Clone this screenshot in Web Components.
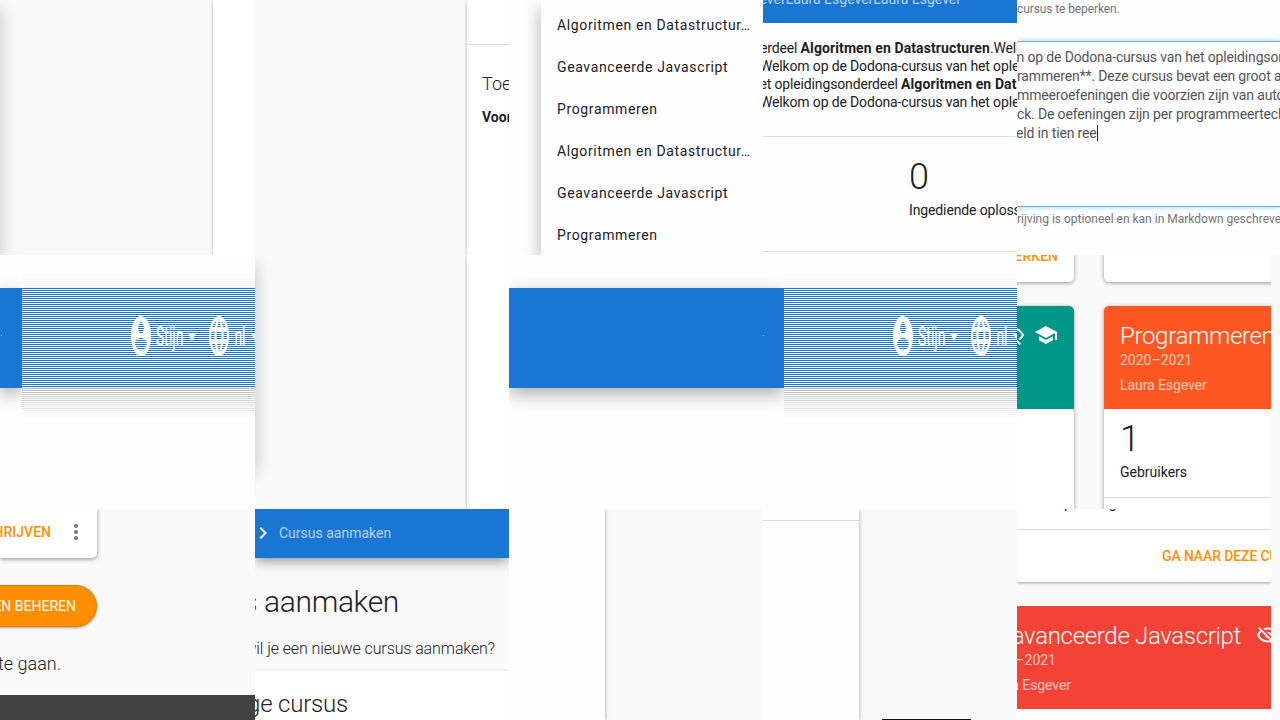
<!DOCTYPE html>
<html lang="nl">
<head>
<meta charset="utf-8">
<title>Dodona</title>
<style>
html,body{margin:0;padding:0;width:1280px;height:720px;overflow:hidden;background:#fefefe}
body{font-family:Roboto,"Liberation Sans",sans-serif;color:#212121}
</style>
</head>
<body>
<tile-mosaic></tile-mosaic>
<script>
const ICONS={
account:'M12 19.2c-2.5 0-4.71-1.28-6-3.2.03-2 4-3.1 6-3.1s5.97 1.1 6 3.1c-1.29 1.92-3.5 3.2-6 3.2M12 5a3 3 0 0 1 3 3 3 3 0 0 1-3 3 3 3 0 0 1-3-3 3 3 0 0 1 3-3m0-3A10 10 0 0 0 2 12a10 10 0 0 0 10 10 10 10 0 0 0 10-10c0-5.53-4.5-10-10-10z',
web:'M16.36,14C16.44,13.34 16.5,12.68 16.5,12C16.5,11.32 16.44,10.66 16.36,10H19.74C19.9,10.64 20,11.31 20,12C20,12.69 19.9,13.36 19.74,14M14.59,19.56C15.19,18.45 15.65,17.25 15.97,16H18.92C17.96,17.65 16.43,18.93 14.59,19.56M14.34,14H9.66C9.56,13.34 9.5,12.68 9.5,12C9.5,11.32 9.56,10.65 9.66,10H14.34C14.43,10.65 14.5,11.32 14.5,12C14.5,12.68 14.43,13.34 14.34,14M12,19.96C11.17,18.76 10.5,17.43 10.09,16H13.91C13.5,17.43 12.83,18.76 12,19.96M8,8H5.08C6.03,6.34 7.57,5.06 9.4,4.44C8.8,5.55 8.35,6.75 8,8M5.08,16H8C8.35,17.25 8.8,18.45 9.4,19.56C7.57,18.93 6.03,17.65 5.08,16M4.26,14C4.1,13.36 4,12.69 4,12C4,11.31 4.1,10.64 4.26,10H7.64C7.56,10.66 7.5,11.32 7.5,12C7.5,12.68 7.56,13.34 7.64,14M12,4.03C12.83,5.23 13.5,6.57 13.91,8H10.09C10.5,6.57 11.17,5.23 12,4.03M18.92,8H15.97C15.65,6.75 15.19,5.55 14.59,4.44C16.43,5.07 17.96,6.34 18.92,8M12,2C6.47,2 2,6.5 2,12A10,10 0 0,0 12,22A10,10 0 0,0 22,12A10,10 0 0,0 12,2Z',
eye:'M2,5.27L3.28,4L20,20.72L18.73,22L15.65,18.92C14.5,19.3 13.28,19.5 12,19.5C7,19.5 2.73,16.39 1,12C1.69,10.24 2.79,8.69 4.19,7.46L2,5.27M12,9A3,3 0 0,1 15,12C15,12.35 14.94,12.69 14.83,13L11,9.17C11.31,9.06 11.65,9 12,9M12,4.5C17,4.5 21.27,7.61 23,12C22.18,14.08 20.79,15.88 19,17.19L17.58,15.76C18.94,14.82 20.06,13.54 20.82,12C19.17,8.64 15.76,6.5 12,6.5C10.91,6.5 9.84,6.68 8.84,7L7.3,5.47C8.74,4.85 10.33,4.5 12,4.5M3.18,12C4.83,15.36 8.24,17.5 12,17.5C12.69,17.5 13.37,17.43 14,17.29L11.72,15C10.29,14.85 9.15,13.71 9,12.28L5.6,8.87C4.61,9.72 3.78,10.78 3.18,12Z',
school:'M12,3L1,9L12,15L21,10.09V17H23V9M5,13.18V17.18L12,21L19,17.18V13.18L12,17L5,13.18Z',
chevron:'M8.59,16.58L13.17,12L8.59,7.41L10,6L16,12L10,18L8.59,16.58Z',
dots:'M12,16A2,2 0 0,1 14,18A2,2 0 0,1 12,20A2,2 0 0,1 10,18A2,2 0 0,1 12,16M12,10A2,2 0 0,1 14,12A2,2 0 0,1 12,14A2,2 0 0,1 10,12A2,2 0 0,1 12,10M12,4A2,2 0 0,1 14,6A2,2 0 0,1 12,8A2,2 0 0,1 10,6A2,2 0 0,1 12,4Z'
};
function define(name,html,after){
  customElements.define(name,class extends HTMLElement{
    connectedCallback(){
      if(this.shadowRoot)return;
      const r=this.attachShadow({mode:'open'});
      r.innerHTML='<style>*{box-sizing:border-box}:host{display:block;box-sizing:border-box}</style>'+html;
      if(after)after(this,r);
    }
  });
}

define('ui-icon','<style>:host{width:24px;height:24px;flex:none}svg{display:block;width:100%;height:100%;fill:currentColor}</style><svg viewBox="0 0 24 24" preserveAspectRatio="none"><path/></svg>',
(h,r)=>r.querySelector('path').setAttribute('d',ICONS[h.getAttribute('name')]));

/* One line of text: size, weight and line height; "x" indents it, "end" aligns its right side. */
define('ui-text','<style>:host{white-space:pre;flex:none}:host([end]){display:flex;justify-content:flex-end}</style><span><slot></slot></span>',
(h,r)=>{
  const a=n=>h.getAttribute(n);
  h.style.fontSize=(a('size')||14)+'px';
  h.style.fontWeight=a('weight')||400;
  h.style.lineHeight=(a('h')||20)+'px';
  h.style.height=(a('h')||20)+'px';
  if(a('x'))h.style.marginLeft=a('x')+'px';
  if(a('end'))h.style.width=a('end')+'px';
  if(a('top'))h.style.marginTop=a('top')+'px';
  if(a('ls'))h.style.letterSpacing=a('ls')+'px';
});

define('tile-mosaic',`<style>
:host{display:grid;width:1280px;height:720px;grid-template-columns:255px 254px 254px 254px 254px 9px;grid-template-rows:255px 254px 211px}
:host>*{overflow:hidden;min-width:0}
.wide{grid-column:span 2}
.edge{background:#fafafa}
</style>
<page-gutter style="--card:42px;--sheet:255px"></page-gutter>
<access-tile></access-tile>
<menu-tile></menu-tile>
<intro-tile></intro-tile>
<form-tile class="wide"></form-tile>
<banner-tile style="--solid:22px;--dot:2px"></banner-tile>
<page-gutter style="--card:42px;--sheet:212px"></page-gutter>
<banner-tile class="wide" style="--solid:275px;--dot:255px"></banner-tile>
<course-tile></course-tile>
<div class="edge"></div>
<actions-tile></actions-tile>
<create-tile></create-tile>
<sheet-tile style="--sheet:96px"></sheet-tile>
<sheet-tile lined style="--sheet:96px"></sheet-tile>
<red-tile></red-tile>
<div class="edge"></div>`);

define('page-gutter',`<style>
:host{display:flex;justify-content:space-between;background:#fafafa;overflow:hidden}
.side{width:10px;margin-left:-10px;height:var(--sheet);box-shadow:0 8px 17px 0 rgba(0,0,0,.27)}
.card{width:var(--card);background:#fff;box-shadow:0 1px 3px rgba(0,0,0,.35)}
</style><div class="side"></div><div class="card"></div>`);

define('access-tile',`<style>
:host{display:flex;justify-content:flex-end;background:#fafafa}
.card{width:42px;background:#fff;box-shadow:0 1px 3px rgba(0,0,0,.35);overflow:visible}
.top{height:45px;border-bottom:1px solid #ddd}
.body{padding:27px 0 0 15px;overflow:hidden}
</style><div class="card"><div class="top"></div><div class="body">
<ui-text size="18" weight="300" h="24">Toegang</ui-text><ui-text weight="700" h="20" top="11">Voor wie</ui-text></div></div>`);

define('menu-tile',`<style>
:host{background:#fefefe;padding-left:32px}
.menu{height:255px;padding:4px 0 0 16px;background:#fefefe;box-shadow:0 8px 17px rgba(0,0,0,.3)}
</style><div class="menu"></div>`,(h,r)=>{
  const m=r.querySelector('.menu'),n=['Algoritmen en Datastructur…','Geavanceerde Javascript','Programmeren'];
  m.innerHTML=[...n,...n].map(t=>`<ui-text h="42" ls="0.63">${t}</ui-text>`).join('');
});

define('intro-tile',`<style>
:host{background:#fefefe}
.head{height:23px;background:#1976d2;color:rgba(255,255,255,.7);overflow:hidden}
.copy{height:114px;padding-top:16px;border-bottom:1px solid #ddd;letter-spacing:-.15px}
b{letter-spacing:.1px}
.stat{height:115px;padding:20px 0 0 146px;border-bottom:1px solid #ddd}
</style>
<div class="head"><ui-text end="198" top="-11">Laura EsgeverLaura EsgeverLaura Esgever</ui-text></div>
<div class="copy">
<ui-text h="18" x="-3">erdeel <b>Algoritmen en Datastructuren</b>.Welkom</ui-text>
<ui-text h="18" x="-3">Welkom op de Dodona-cursus van het opleidings</ui-text>
<ui-text h="18" x="-3.5">et opleidingsonderdeel <b>Algoritmen en Datastructuren</b></ui-text>
<ui-text h="18" x="-3">Welkom op de Dodona-cursus van het opleidings</ui-text>
</div>
<div class="stat"><ui-text size="36" weight="300" h="40">0</ui-text><ui-text top="3" ls="-0.12">Ingediende oplossingen</ui-text></div>`);

define('form-tile',`<style>
:host{background:#fefefe;color:#757575}
.hint{height:41px;overflow:hidden}
.area{height:166px;border:solid #66afe9;border-width:1px 0;box-shadow:0 0 6px rgba(33,150,243,.4);padding-top:6px;color:#555;letter-spacing:-.15px}
.caret{display:inline-block;width:1px;height:16px;background:#222;vertical-align:-3px}
</style>
<div class="hint"><ui-text size="12" h="17" top="-16">toegang tot de cursus</ui-text><ui-text size="12" h="17" ls="-0.1">cursus te beperken.</ui-text></div>
<div class="area">
<ui-text h="19" x="-5">m op de Dodona-cursus van het opleidingsonderdeel</ui-text>
<ui-text h="19">rammeren**. Deze cursus bevat een groot aantal</ui-text>
<ui-text h="19">mmeeroefeningen die voorzien zijn van automatische</ui-text>
<ui-text h="19">ck. De oefeningen zijn per programmeertechniek</ui-text>
<ui-text h="19" x="-1">eld in tien ree<i class="caret"></i></ui-text>
</div>
<ui-text size="12" h="18" top="3">rijving is optioneel en kan in Markdown geschreven</ui-text>`);

define('banner-tile',`<style>
:host{background:#fefefe;padding-top:33px}
.bar{display:flex;height:100px;color:#fff}
.solid{width:var(--solid);background:#1976d2;box-shadow:0 6px 17px rgba(0,0,0,.32);flex:none;padding-top:47px}
.solid i{display:block;width:1px;height:1px;margin-left:calc(var(--dot) - 1px);background:#9cc4ec}
.lines{position:relative;width:233px;flex:none;display:flex;align-items:center;padding-left:107px;background:repeating-linear-gradient(#1976d2 0 1px,#fff 1px 2px)}
.lines::after{content:"";position:absolute;left:0;right:0;top:100px;height:30px;background:linear-gradient(rgba(254,254,254,0),#fefefe),repeating-linear-gradient(#bbb 0 1px,#fefefe 1px 2px)}
.lines::before{content:"";position:absolute;left:0;right:0;top:-18px;height:18px;background:linear-gradient(#fefefe,rgba(254,254,254,.2)),repeating-linear-gradient(#fefefe 0 1px,#eee 1px 2px)}
ui-icon{height:48px;margin-top:-4px}
ui-text{transform:scaleY(2);position:relative;top:-2px;margin-left:3px}
.caret{border:solid transparent;border-width:8px 4px 0;border-top-color:#fff;margin:-3px 0 0 5px}
</style><div class="bar"><div class="solid"><i></i></div><div class="lines">
<ui-icon name="account"></ui-icon><ui-text>Stijn</ui-text><i class="caret"></i>
<ui-icon name="web" style="margin-left:11px"></ui-icon><ui-text>nl</ui-text><i class="caret"></i></div></div>`);

define('course-head',`<style>
:host{height:103px;color:rgba(255,255,255,.7);background:var(--tone);padding-top:14px;overflow:hidden}
.row{display:flex;align-items:center;height:30px;color:#fff}
</style><div class="row"><slot name="title"></slot></div><slot></slot>`);

define('course-tile',`<style>
:host{display:grid;grid-template-columns:57px 1fr;grid-template-rows:27px 1fr;gap:24px 30px;background:#fafafa}
.card{background:#fff;box-shadow:0 1px 4px rgba(0,0,0,.4);border-radius:5px;min-width:0}
.l{margin-left:-10px;padding-left:10px}.r{margin-right:-10px}
.up{margin-top:-10px;padding-top:10px;color:#ff8f00}
.down{border-radius:5px 5px 0 0;margin-bottom:-10px}
.l course-head{margin-left:-10px;padding-left:10px;border-radius:0 5px 0 0}
.r course-head{border-radius:5px 0 0 0}
.stat{height:89px;padding:11px 0 0 16px;border-bottom:1px solid #ddd}
</style>
<div class="card l up"><ui-text weight="500" end="41" top="-9">BEWERKEN</ui-text></div><div class="card r up"></div>
<div class="card l down"><course-head style="--tone:#009688"><ui-icon slot="title" name="eye" style="margin:0 9px 0 -16px"></ui-icon><ui-icon slot="title" name="school"></ui-icon></course-head></div>
<div class="card r down"><course-head style="--tone:#ff5722"><ui-text slot="title" size="24" weight="300" h="30" x="16" top="2" ls="-0.32">Programmeren</ui-text><ui-text x="16">2020–2021</ui-text><ui-text x="16" top="5" ls="-0.08">Laura Esgever</ui-text></course-head>
<div class="stat"><ui-text size="36" weight="300" h="38">1</ui-text><ui-text top="4">Gebruikers</ui-text></div></div>`);

define('red-tile',`<style>
:host{background:#fafafa}
.last{height:73px;background:#fff;box-shadow:0 1px 3px rgba(0,0,0,.35)}
.text{height:21px;overflow:hidden;border-bottom:1px solid #ddd}
.go{height:52px;padding-top:16px;color:#ff8f00}
.card{height:130px;margin-top:24px;background:#fff}
</style>
<div class="last"><div class="text"><ui-text x="39" top="-16">oplossingen</ui-text></div><div class="go"><ui-text weight="500" x="145" ls="-0.12">GA NAAR DEZE CURSUS</ui-text></div></div>
<div class="card"><course-head style="--tone:#f44336"><ui-text slot="title" size="24" weight="300" h="30" end="224" top="2" ls="-0.32">Geavanceerde Javascript</ui-text><ui-icon slot="title" name="eye" style="margin-left:15px"></ui-icon><ui-text end="39">2020–2021</ui-text><ui-text end="54" top="5" ls="-0.08">Laura Esgever</ui-text></course-head></div>`);

define('actions-tile',`<style>
:host{background:#fafafa}
.card{display:flex;align-items:center;width:97px;height:49px;background:#fff;color:#ff8f00;border-radius:0 0 5px 0;box-shadow:0 1px 4px rgba(0,0,0,.45);padding-bottom:3px}
.btn{width:117px;height:42px;margin:27px 0 0 -20px;border:1px solid #e07f00;border-radius:21px;background:#ff8f00;color:#fff;box-shadow:0 1px 3px rgba(0,0,0,.35);padding-top:10px}
.foot{height:25px;margin-top:19px;background:#424242}
</style>
<div class="card"><ui-text weight="500" end="51">INSCHRIJVEN</ui-text><ui-icon name="dots" style="color:#757575;margin-left:13px"></ui-icon></div>
<div class="btn"><ui-text end="95">REEKSEN BEHEREN</ui-text></div>
<ui-text size="18" weight="300" h="24" end="61" top="25">te gaan.</ui-text>
<div class="foot"></div>`);

define('create-tile',`<style>
:host{background:#fafafa}
.nav{display:flex;align-items:center;height:49px;background:#1976d2;color:rgba(255,255,255,.7);box-shadow:0 3px 12px rgba(0,0,0,.42);padding-bottom:1px}
.card{height:60px;margin-top:11px;padding-top:18px;background:#fff;box-shadow:0 1px 4px rgba(0,0,0,.15)}
.nav ui-icon{color:#fff;margin-left:-4px}
</style>
<div class="nav"><ui-icon name="chevron"></ui-icon><ui-text x="4">Cursus aanmaken</ui-text></div>
<ui-text size="30" weight="300" h="40" end="144" top="24" ls="-0.35">Cursus aanmaken</ui-text>
<ui-text size="16" weight="300" h="22" end="240" top="16" ls="-0.1">Hoe wil je een nieuwe cursus aanmaken?</ui-text>
<div class="card"><ui-text size="24" weight="300" h="30" end="93" ls="-0.2">Volledige cursus</ui-text></div>`);

define('sheet-tile',`<style>
:host{background:#fafafa;display:flex}
.sheet{width:var(--sheet);background:#fefefe;box-shadow:0 1px 4px rgba(0,0,0,.35)}
:host([lined]) .sheet::before{content:"";display:block;margin-top:11px;height:1px;background:#ddd}
:host([lined])::after{content:"";align-self:flex-end;width:89px;height:1px;margin-left:23px;background:#111}
</style><div class="sheet"></div>`);
</script>
</body>
</html>
